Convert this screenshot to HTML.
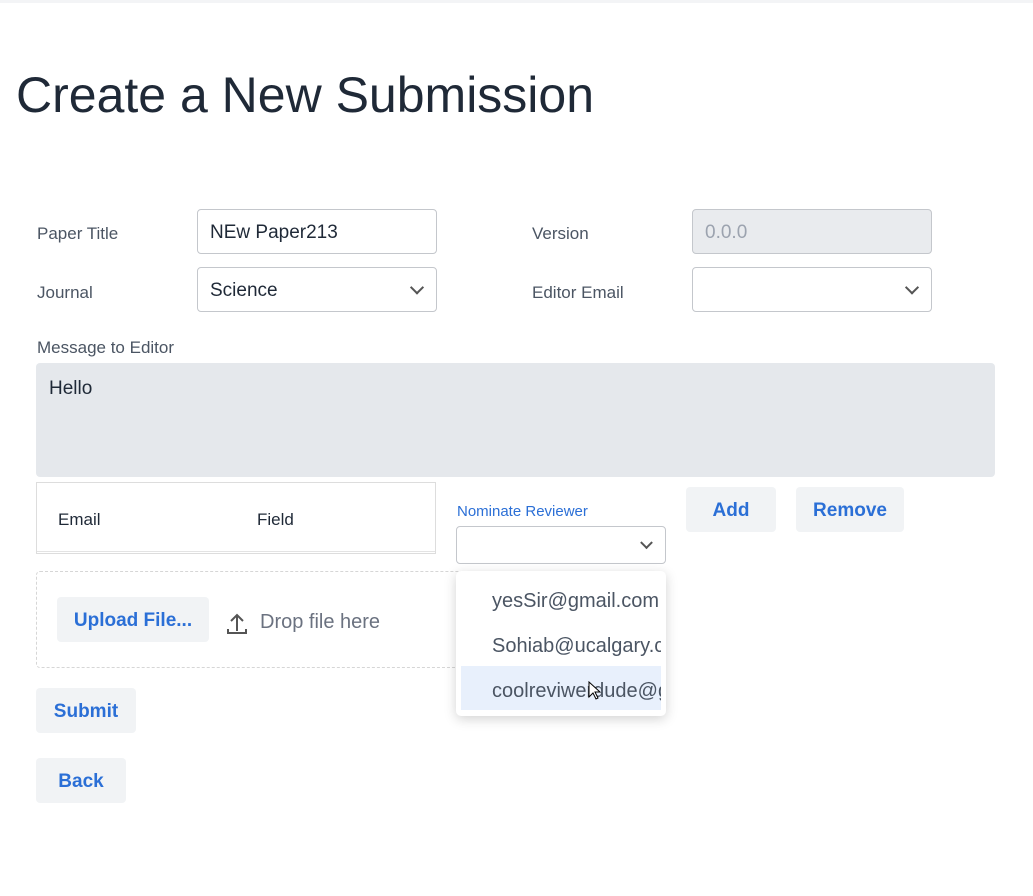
<!DOCTYPE html>
<html><head><style>
*{box-sizing:border-box}
body{margin:0;width:1033px;height:896px;background:#fff;font-family:"Liberation Sans",sans-serif;position:relative;overflow:hidden}
.a{position:absolute}
.lbl{font-size:17px;color:#4b5563}
.inp{border:1px solid #c4c7cc;border-radius:4px;background:#fff;font-size:19px;color:#1f2937;padding-left:12px;padding-top:3px;display:flex;align-items:center}
.btn{background:#f1f3f5;border-radius:4px;color:#2b6fd6;font-size:19px;font-weight:bold;display:flex;align-items:center;justify-content:center;padding-top:3px}
.chev{position:absolute;right:14px;top:50%;width:10px;height:10px;border-right:2px solid #555;border-bottom:2px solid #555;transform:translateY(-75%) rotate(45deg)}
</style></head><body>
<div class="a" style="left:0;top:0;width:1033px;height:3px;background:#f3f4f6"></div>
<div class="a" style="left:16px;top:66px;font-size:50px;color:#1f2937">Create a New Submission</div>

<div class="a lbl" style="left:37px;top:224px">Paper Title</div>
<div class="a inp" style="left:197px;top:209px;width:240px;height:45px">NEw Paper213</div>
<div class="a lbl" style="left:37px;top:283px">Journal</div>
<div class="a inp" style="left:197px;top:267px;width:240px;height:45px">Science<span class="chev"></span></div>
<div class="a lbl" style="left:532px;top:224px">Version</div>
<div class="a inp" style="left:692px;top:209px;width:240px;height:45px;background:#e9ebee;color:#9ca3af">0.0.0</div>
<div class="a lbl" style="left:532px;top:283px">Editor Email</div>
<div class="a inp" style="left:692px;top:267px;width:240px;height:45px"><span class="chev"></span></div>

<div class="a lbl" style="left:37px;top:338px">Message to Editor</div>
<div class="a" style="left:36px;top:363px;width:959px;height:114px;background:#e5e8ec;border-radius:4px;padding:15px 13px;font-size:19px;color:#1f2937">Hello</div>

<div class="a" style="left:36px;top:482px;width:400px;height:72px;border:1px solid #ddd"></div>
<div class="a" style="left:37px;top:551px;width:398px;height:1px;background:#e3e3e3"></div>
<div class="a" style="left:58px;top:510px;font-size:17px;color:#1f2937">Email</div>
<div class="a" style="left:257px;top:510px;font-size:17px;color:#1f2937">Field</div>

<div class="a" style="left:457px;top:503px;font-size:15px;color:#2b6fd6">Nominate Reviewer</div>
<div class="a inp" style="left:456px;top:526px;width:210px;height:38px"><span class="chev" style="width:9px;height:9px"></span></div>
<div class="a btn" style="left:686px;top:487px;width:90px;height:45px">Add</div>
<div class="a btn" style="left:796px;top:487px;width:108px;height:45px">Remove</div>

<div class="a" style="left:36px;top:571px;width:440px;height:97px;border:1px dashed #d6d6d6;border-radius:4px"></div>
<div class="a btn" style="left:57px;top:597px;width:152px;height:45px">Upload File...</div>
<svg class="a" style="left:226px;top:611px" width="22" height="24" viewBox="0 0 22 24"><path d="M11 20V4M5 10l6-6 6 6M2 18v4h18v-4" fill="none" stroke="#555" stroke-width="2"/></svg>
<div class="a" style="left:260px;top:611px;font-size:20px;color:#6b7280">Drop file here</div>

<div class="a" style="left:456px;top:571px;width:210px;height:145px;background:#fff;border-radius:5px;box-shadow:0 3px 12px rgba(0,0,0,0.18);overflow:hidden">
<div class="a" style="left:0;top:0;width:210px;height:47px;padding:19px 0 0 36px;font-size:20px;color:#4b5563;white-space:nowrap">yesSir@gmail.com</div>
<div class="a" style="left:0;top:47px;width:205px;height:47px;padding:17px 0 0 36px;font-size:20px;color:#4b5563;white-space:nowrap;overflow:hidden">Sohiab@ucalgary.ca</div>
<div class="a" style="left:5px;top:95px;width:200px;height:44px;background:#e8f0fc;padding:14px 0 0 31px;font-size:20px;color:#4b5563;white-space:nowrap;overflow:hidden">coolreviwerdude@gmail.com</div>
</div>
<svg class="a" style="left:588px;top:681px" width="14" height="20" viewBox="0 0 14 20"><path d="M1 1v15l4-4 3 6 2-1-3-6h5z" fill="#fff" stroke="#000" stroke-width="1"/></svg>

<div class="a btn" style="left:36px;top:688px;width:100px;height:45px">Submit</div>
<div class="a btn" style="left:36px;top:758px;width:90px;height:45px">Back</div>
</body></html>
